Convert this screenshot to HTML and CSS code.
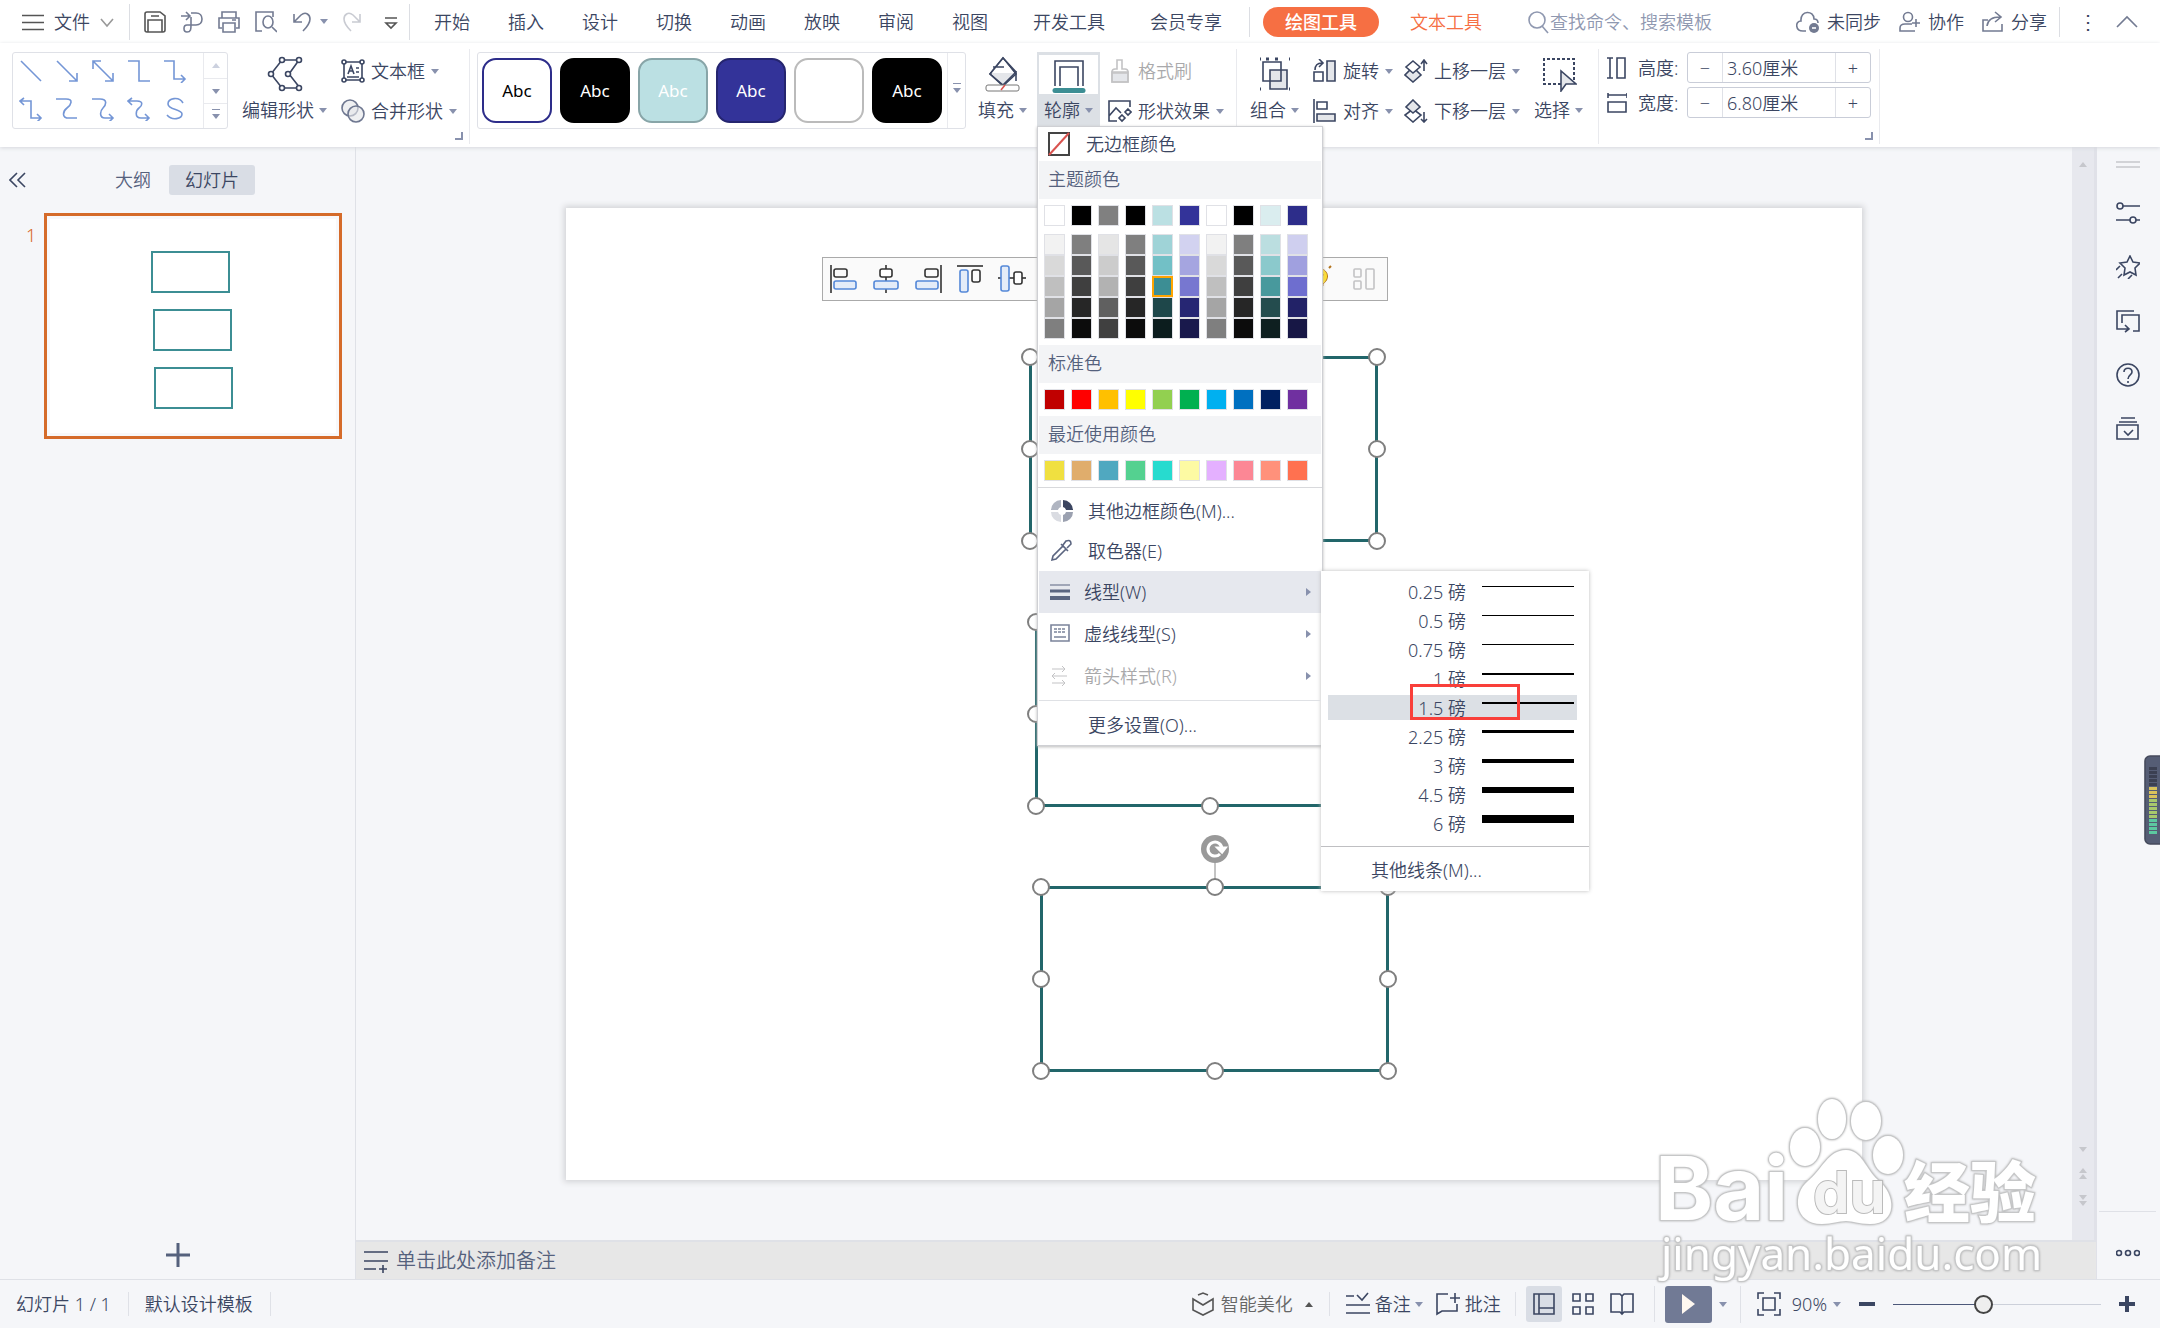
FILE: index.html
```html
<!DOCTYPE html>
<html lang="zh-CN">
<head>
<meta charset="utf-8">
<title>演示文稿</title>
<link rel="stylesheet" href="styles.css">
</head>
<body>
<header class="menubar">
  <button class="file"><svg width="22" height="22"><path d="M0 4.500h22M0 11.500h22M0 18.500h22"/></svg><span>文件</span><svg class="mute" width="14" height="22"><path d="M1 8l6 7 6-7"/></svg></button>
  <div class="quick">
    <button aria-label="保存"><svg width="22" height="22" class="dark"><path d="M1 3q0-2 2-2h13l5 4v14q0 2-2 2H3q-2 0-2-2zM4 21v-12h14v12M7 5h8"/></svg></button>
    <button aria-label="导出"><svg width="22" height="22"><path d="M0 5h8M5 1l4 4-4 4M10 2h5c8 0 8 12 0 12H6c-4 0-4 7 0 7s4-3 4-7V6"/></svg></button>
    <button aria-label="打印"><svg width="22" height="22"><path d="M4 7V1h14v6M4 17H1V7h20v10h-3M5 12h12v9H5zM14 9h4"/></svg></button>
    <button aria-label="预览"><svg width="22" height="22"><path d="M7 20H1V1h17v5M17 16l5 5"/><ellipse cx="13" cy="11" rx="5" ry="6"/></svg></button>
    <button class="undo" aria-label="撤销"><svg width="22" height="22"><path d="M2 3v8h8M2 11l7-7c5-4 9 0 9 4s-3 8-7 12"/></svg><i class="caret"></i></button>
    <button aria-label="恢复"><svg width="22" height="22" class="faint"><path d="M17 3v8H9M17 11l-7-7C5 0 1 4 1 8s3 8 7 12"/></svg></button>
    <button aria-label="更多"><svg width="22" height="22" class="dark"><path d="M5 7h12M6 12h10l-5 5z"/></svg></button>
  </div>
  <nav class="tabs">
    <a href="#">开始</a><a href="#">插入</a><a href="#">设计</a><a href="#">切换</a><a href="#">动画</a><a href="#">放映</a><a href="#">审阅</a><a href="#">视图</a><a href="#" class="wide">开发工具</a><a href="#" class="wide">会员专享</a>
  </nav>
  <a href="#" class="pill">绘图工具</a>
  <a href="#" class="texttool">文本工具</a>
  <label class="search"><svg width="22" height="24"><circle cx="9" cy="10" r="8"/><path d="M14 16l6 7"/></svg><input type="text" placeholder="查找命令、搜索模板" aria-label="搜索"></label>
  <div class="account">
    <button><svg width="24" height="22"><path d="M10 20H7c-8 0-8-10-2-10C4-1 18-1 18 8c3 0 4 2 4 4"/><circle cx="18" cy="17" r="5" class="dot"/><path class="wh" d="M16 17h4"/></svg>未同步</button>
    <button><svg width="22" height="22"><circle cx="9" cy="6" r="4.500"/><path d="M13 13H6q-5 0-5 4v3h15M17 8v8M13 12h8"/></svg>协作</button>
    <button><svg width="22" height="22"><path d="M6 9H1v11h19v-7M5 15q1-9 13-9M13 1l6 5-6 5"/></svg>分享</button>
    <button class="dots" aria-label="菜单">⋮</button>
    <button aria-label="收起"><svg width="22" height="22"><path d="M1 16L11 6l10 10"/></svg></button>
  </div>
</header>

<section class="ribbon">
  <div class="group">
    <div class="shapes">
      <div class="shapegrid">
        <svg width="24" height="24"><path d="M2 2l20 20"/></svg>
        <svg width="24" height="24"><path d="M2 2l20 20M22 14v8h-8"/></svg>
        <svg width="24" height="24"><path d="M2 2l20 20M22 14v8h-8M2 10V2h8"/></svg>
        <svg width="24" height="24"><path d="M1 2h11v20h11"/></svg>
        <svg width="24" height="24"><path d="M1 2h10v18h11M18 16l4 4-4 4"/></svg>
        <svg width="24" height="24"><path d="M5 1L1 4l4 4M1 4h11v17h10M18 17l4 4-4 4"/></svg>
        <svg width="24" height="24"><path d="M1 2h10c8 0 5 6 1 9s-6 10 2 10h8"/></svg>
        <svg width="24" height="24"><path d="M1 2h8c8 0 6 6 3 9s-4 10 2 10h8M18 17l4 4-4 4"/></svg>
        <svg width="24" height="24"><path d="M5 1L1 4l4 4M1 4h9c7 0 5 5 2 7s-5 10 2 10h8M18 17l4 4-4 4"/></svg>
        <svg width="24" height="24"><path d="M20 6C16-1 5 1 5 7s14 5 14 10-10 7-15 1"/></svg>
      </div>
      <div class="spin"><button aria-label="上"><i class="caret up pale"></i></button><button aria-label="下"><i class="caret"></i></button><button aria-label="展开"><i class="caret bar"></i></button></div>
    </div>
    <button class="big"><svg width="36" height="36"><path d="M15 4h17L22 18l11 14H15L4 18z" /><g class="fill"><circle cx="15" cy="4" r="2.500"/><circle cx="32" cy="4" r="2.500"/><circle cx="21" cy="18" r="2.500"/><circle cx="4" cy="18" r="2.500"/><circle cx="15" cy="32" r="2.500"/><circle cx="32" cy="32" r="2.500"/></g></svg><span>编辑形状<i class="caret"></i></span></button>
    <div class="stack">
      <button><svg width="24" height="24"><path d="M3 3h18v18H3zM7 15l3-8 3 8M8 12h4M15 9h3M15 13h3M6 18h12"/><g class="fill"><circle cx="3" cy="3" r="2"/><circle cx="21" cy="3" r="2"/><circle cx="3" cy="21" r="2"/><circle cx="21" cy="21" r="2"/></g></svg>文本框<i class="caret"></i></button>
      <button><svg width="24" height="24" class="soft"><circle cx="9" cy="9" r="8"/><circle cx="15" cy="15" r="8"/></svg>合并形状<i class="caret"></i></button>
    </div>
    <i class="corner"></i>
  </div>

  <div class="group styles">
    <div class="gallery">
      <button class="tile t1">Abc</button><button class="tile t2">Abc</button><button class="tile t3">Abc</button><button class="tile t4">Abc</button><button class="tile t5" aria-label="白色样式"></button><button class="tile t2">Abc</button>
      <button class="more" aria-label="更多样式"><i class="caret bar"></i></button>
    </div>
    <button class="big"><svg width="36" height="36"><path class="soft" d="M5 18L18 2l13 16-13 12z"/><path class="cover" d="M6 17L18 3l11 14z"/><path d="M5 18L18 2l13 14-13 13zM8 11h11M31 15v10"/><rect class="fill grey" x="1" y="29" width="33" height="6" rx="2"/><path class="red" d="M16 34l4-5"/></svg><span>填充<i class="caret"></i></span></button>
    <div class="outline">
      <button class="outlinebtn"><span class="iconbox"><svg width="34" height="36"><path d="M3 29V4h28v25M8 29V10h18v19"/><path class="teal" d="M3 33.500h28"/></svg></span><span class="lbl">轮廓<i class="caret"></i></span></button>
      <div class="menu">
        <button class="noborder"><svg width="22" height="24"><rect x="1" y="1" width="20" height="22" class="dark"/><path class="red" d="M1 23L21 1"/></svg>无边框颜色</button>
        <h4>主题颜色</h4>
        <div class="swatches" id="theme"></div>
        <div class="swatches tints" id="tints"></div>
        <h4>标准色</h4>
        <div class="swatches" id="standard"></div>
        <h4>最近使用颜色</h4>
        <div class="swatches" id="recent"></div>
        <ul>
          <li><button><svg width="24" height="24"><g class="pie"><path d="M13 1v7a4 4 0 0 1 3 3h7A10 10 0 0 0 13 1z" fill="#3b4560"/><path d="M11 1v7a4 4 0 0 0-3 3H1A10 10 0 0 1 11 1z" fill="#b0b5c1"/><path d="M13 23v-7a4 4 0 0 0 3-3h7A10 10 0 0 1 13 23z" fill="#9ba1b0"/><path d="M11 23v-7a4 4 0 0 1-3-3H1A10 10 0 0 0 11 23z" fill="#dadce2"/></g></svg>其他边框颜色(M)...</button></li>
          <li><button><svg width="24" height="24" class="picker"><path d="M2 21l1-4L13 7l3 3L6 20zM11 5l7 7M13 6l3-4q5-2 5 3l-4 4"/></svg>取色器(E)</button></li>
          <li class="sub on"><button><svg width="20" height="20" class="picker"><path class="w1" d="M0 3h20"/><path class="w3" d="M0 9h20"/><path class="w4" d="M0 16h20"/></svg>线型(W)<i class="arrow"></i></button>
            <div class="submenu">
              <ul id="weights"></ul>
              <button class="otherlines">其他线条(M)...</button>
              <i class="mark"></i>
            </div>
          </li>
          <li class="sub"><button><svg width="20" height="20" class="thin"><path d="M1 1h18v16H1zM4 13h12"/><path stroke-dasharray="3 1" d="M4 5h12M4 8h12"/></svg>虚线线型(S)<i class="arrow"></i></button></li>
          <li class="sub off"><button disabled><svg width="20" height="20"><path d="M2 3h13M12 0l3 3-3 3M2 10h15M5 7l-3 3 3 3M2 17h13M12 14l3 3-3 3"/></svg>箭头样式(R)<i class="arrow"></i></button></li>
          <li class="last"><button>更多设置(O)...</button></li>
        </ul>
      </div>
    </div>
    <div class="stack">
      <button disabled><svg width="24" height="24" class="faint"><path class="soft" d="M4 13h16v10H4z"/><path d="M4 13q0-3 3-3h2V1h5v9h3q3 0 3 3v10H4zM4 14h16"/></svg>格式刷</button>
      <button><svg width="24" height="24"><path d="M22 8V2H1v20h8M1 17l7-8 5 5"/><path d="M14 16l3 3-3 3-3-3zM20 10l3 3-3 3-3-3z"/></svg>形状效果<i class="caret"></i></button>
    </div>
  </div>

  <div class="group arrange">
    <button class="big"><svg width="36" height="36"><path class="soft" d="M13 14h17v19H13z"/><path d="M6 6h18v19H6z"/><path d="M3 3h1M32 3h1M3 33h1M32 33h1M9 3h3M18 3h3" class="w3"/></svg><span>组合<i class="caret"></i></span></button>
    <div class="stack">
      <button><svg width="24" height="24"><path class="soft" d="M14 2h8v20h-8z"/><path d="M10 22H1v-9h9zM2 11q0-7 7-7M6 0l4 4-4 4"/></svg>旋转<i class="caret"></i></button>
      <button><svg width="24" height="24"><path d="M1 0v24M4 3h10v7H4z"/><path class="soft" d="M4 15h18v7H4z"/></svg>对齐<i class="caret"></i></button>
    </div>
    <div class="stack">
      <button><svg width="24" height="24"><path class="soft" d="M9 8l8 8-8 7-8-7z"/><path class="cover dark2" d="M9 2l7 6-7 6-7-6z"/><path d="M20 12V2M17 5l3-4 3 4"/></svg>上移一层<i class="caret"></i></button>
      <button><svg width="24" height="24"><path class="cover dark2" d="M9 10l8 6-8 7-8-7z"/><path class="soft" d="M9 1l7 7-7 6-7-6z"/><path d="M20 13v10M17 20l3 3 3-3"/></svg>下移一层<i class="caret"></i></button>
    </div>
    <button class="big"><svg width="36" height="36"><path stroke-dasharray="3 2" class="w2" d="M20 28H3V3h30v25"/><path class="soft" d="M20 15v20l5-7 10 0z"/></svg><span>选择<i class="caret"></i></span></button>
  </div>

  <div class="group size">
    <div class="field"><svg width="20" height="24"><path d="M0 2h6M3 2v20M0 22h6M10 2h8v20h-8z"/></svg><label for="h">高度:</label><span class="stepper"><button aria-label="减小高度">−</button><input id="h" value="3.60厘米"><button aria-label="增大高度">+</button></span></div>
    <div class="field"><svg width="20" height="24"><path d="M1 2v5M1 4h19M20 2v5M1 11h18v10H1z"/></svg><label for="w">宽度:</label><span class="stepper"><button aria-label="减小宽度">−</button><input id="w" value="6.80厘米"><button aria-label="增大宽度">+</button></span></div>
    <i class="corner"></i>
  </div>
</section>

<main class="work">
  <aside class="left">
    <div class="lefttabs"><button aria-label="收起面板"><svg width="18" height="16"><path d="M8 1L1 8l7 7M16 1L9 8l7 7"/></svg></button><button class="tab">大纲</button><button class="tab on">幻灯片</button></div>
    <div class="thumbrow"><span>1</span><div class="thumb"><i class="m1"></i><i class="m2"></i><i class="m3"></i></div></div>
    <button class="add" aria-label="新建幻灯片"><svg width="26" height="26"><path d="M1 13h24M13 1v24"/></svg></button>
  </aside>
  <section class="center">
    <div class="stage">
      <div class="canvas">
        <div class="slide">
          <div class="floatbar">
            <svg width="28" height="28"><path d="M1 0v28"/><rect x="4" y="4" width="13" height="8" rx="2"/><rect class="blue" x="4" y="16" width="22" height="8" rx="2"/></svg>
            <svg width="28" height="28"><path d="M14 0v28"/><rect class="fill" x="8" y="4" width="12" height="8" rx="2"/><rect class="blue" x="2" y="16" width="24" height="8" rx="2"/></svg>
            <svg width="28" height="28"><path d="M27 0v28"/><rect x="11" y="4" width="13" height="8" rx="2"/><rect class="blue" x="2" y="16" width="22" height="8" rx="2"/></svg>
            <svg width="28" height="28"><path d="M1 1h26"/><rect class="blue" x="4" y="5" width="8" height="22" rx="2"/><rect x="16" y="5" width="8" height="12" rx="2"/></svg>
            <svg width="28" height="28"><path d="M0 13h28"/><rect class="blue" x="3" y="1" width="8" height="25" rx="2"/><rect class="fill" x="16" y="7" width="8" height="12" rx="2"/></svg>
            <svg class="bulb" width="28" height="28"><path d="M11 19C0 12 5 3 13 3s14 9 5 16v2h-7z"/><path class="base" d="M11 24h7M12 27h4M24 3l2-2M12 16l-2-5 3 2 4-2-2 5"/></svg>
            <svg class="faint" width="28" height="28"><rect x="3" y="4" width="7" height="8" rx="1"/><rect x="3" y="16" width="7" height="8" rx="1"/><rect x="15" y="4" width="8" height="20" rx="1"/></svg>
          </div>
          <div class="shape s1"><b class="h nw"></b><b class="h ne"></b><b class="h w"></b><b class="h e"></b><b class="h sw"></b><b class="h s"></b><b class="h se"></b></div>
          <div class="shape s2"><b class="h nw"></b><b class="h ne"></b><b class="h w"></b><b class="h e"></b><b class="h sw"></b><b class="h s"></b><b class="h se"></b></div>
          <div class="shape s3"><svg class="rot" width="30" height="52"><path class="stem" d="M15 28v24"/><ellipse cx="15" cy="15" rx="14" ry="14"/><path d="M20 20a7 7 0 1 1 2-5M18 14h7l-3 4z"/></svg><b class="h nw"></b><b class="h n"></b><b class="h ne"></b><b class="h w"></b><b class="h e"></b><b class="h sw"></b><b class="h s"></b><b class="h se"></b></div>
        </div>
      </div>
      <div class="scroll"><i class="caret up"></i><div class="lower"><i class="caret"></i><span><i class="caret up"></i><i class="caret up"></i></span><span><i class="caret"></i><i class="caret"></i></span></div></div>
    </div>
    <div class="notes"><svg width="24" height="24"><path d="M0 3h24M0 12h24M0 20h12M19 16v8M15 20h8"/></svg>单击此处添加备注</div>
  </section>
  <aside class="right">
    <svg class="grip" width="24" height="24"><path d="M0 9h24M0 14h24"/></svg>
    <button aria-label="属性"><svg width="24" height="24"><circle cx="4" cy="5" r="3"/><path d="M7 5h17M0 19h14M20 19h4"/><circle cx="17" cy="19" r="3"/></svg></button>
    <button aria-label="动画"><svg width="24" height="24"><path d="M14 1l3 6 7 1-5 5 1 7-6-3-6 3 1-7-5-5 7-1zM0 15l4-4M2 23l4-4M12 24l4-4"/></svg></button>
    <button aria-label="切换"><svg width="24" height="24"><path d="M18 2H1v18h12M9 16l4 4-4 3M6 14V6h17v16h-6"/></svg></button>
    <button aria-label="帮助"><svg width="24" height="24"><circle cx="12" cy="12" r="11"/><path d="M8 9c0-5 8-5 8 0 0 3-4 3-4 7M12 18v2"/></svg></button>
    <button aria-label="备份"><svg width="24" height="24"><path d="M5 1h14M3 5h18M1 8h21v14H1zM8 14l4 4 5-5"/></svg></button>
    <button class="moretools" aria-label="更多工具"><svg width="24" height="24"><circle cx="3" cy="12" r="2.500"/><circle cx="12" cy="12" r="2.500"/><circle cx="21" cy="12" r="2.500"/></svg></button>
  </aside>
</main>

<footer class="status">
  <span class="cell">幻灯片 1 / 1</span><span class="cell">默认设计模板</span>
  <div class="tools">
    <button class="beauty"><svg width="24" height="24"><path d="M2 7v11l10 5 10-5V7l-10 6zM7 3l5-2 5 2"/></svg>智能美化<i class="caret up"></i></button>
    <div class="pair"><button><svg width="26" height="24"><path d="M1 4h8M1 13h24M1 21h24M12 3l5 5 6-7"/></svg>备注<i class="caret"></i></button><button><svg width="26" height="24"><path d="M13 2H2v20l5-3h15v-7M20 1v10M15 6h10"/></svg>批注</button></div>
    <div class="views">
      <button class="on" aria-label="普通视图"><svg width="24" height="24"><path d="M2 2h20v20H2zM7 2v20M7 16h15"/></svg></button>
      <button aria-label="浏览视图"><svg width="24" height="24"><path d="M2 2h7v7H2zM15 2h7v7h-7zM2 15h7v7H2zM15 15h7v7h-7z"/></svg></button>
      <button aria-label="阅读视图"><svg width="24" height="24"><path d="M1 2h9l2 2 2-2h9v18h-9l-2 2-2-2H1zM12 4v18"/></svg></button>
    </div>
    <div class="playwrap"><button class="play" aria-label="放映"><svg width="24" height="24"><path d="M6 2l13 10L6 22z"/></svg></button><i class="caret"></i></div>
    <div class="zoom"><svg width="24" height="24"><path d="M1 7V1h6M17 1h6v6M23 17v6h-6M7 23H1v-6M6 6h12v12H6z"/></svg><button>90%<i class="caret"></i></button><button class="pm" aria-label="缩小"><svg width="16" height="24"><path d="M0 12h16"/></svg></button><input type="range" min="0" max="100" value="43" aria-label="缩放"><button class="pm" aria-label="放大"><svg width="16" height="24"><path d="M0 12h16M8 4v16"/></svg></button></div>
  </div>
</footer>

<svg class="watermark" width="400" height="200" viewBox="0 0 400 200">
  <g class="ink">
    <ellipse cx="153" cy="57" rx="15" ry="19"/><ellipse cx="180" cy="29" rx="14" ry="20"/><ellipse cx="214" cy="31" rx="15" ry="19"/><ellipse cx="236" cy="65" rx="15" ry="19"/>
    <path d="M194 60c16 0 20 20 32 30 18 14 20 44-8 44-12 0-16-3-24-3s-14 3-24 3c-28 0-30-30-14-43 14-11 20-31 38-31z"/>
    <text class="latin" x="3" y="130" font-size="88">Bai</text>
    <text class="du" x="161" y="123" font-size="58">du</text>
    <text class="cjk" x="252" y="127" font-size="66">经验</text>
    <text class="url" x="9" y="180" font-size="44">jingyan.baidu.com</text>
  </g>
</svg>
<svg class="meter" width="16" height="90"><rect x="1" y="1" width="24" height="88" rx="5"/><path class="m0" d="M9 12v20"/><path class="ma" d="M9 32v12"/><path class="mb" d="M9 44v20"/><path class="mc" d="M9 64v16"/></svg>
<script src="app.js"></script>
</body>
</html>
```
FILE: app.js
```js
const palettes = {
  theme: ['#ffffff', '#000000', '#808080', '#000000', '#bbe0e3', '#333399', '#ffffff', '#000000', '#daedef', '#2d2d8a'],
  tints: [
    '#f2f2f2', '#7f7f7f', '#e5e5e5', '#7f7f7f', '#9fd3d7', '#d2d2f0', '#f2f2f2', '#7f7f7f', '#bbdee0', '#cfcfef',
    '#d9d9d9', '#595959', '#cccccc', '#595959', '#72c0c6', '#a5a5e0', '#d9d9d9', '#595959', '#8bc9cc', '#a0a0df',
    '#bfbfbf', '#3f3f3f', '#b2b2b2', '#3f3f3f', '#3c8e94', '#7777d0', '#bfbfbf', '#3f3f3f', '#48999d', '#6e6ecf',
    '#a5a5a5', '#262626', '#606060', '#262626', '#1e474a', '#262673', '#a5a5a5', '#262626', '#244c4e', '#222267',
    '#7f7f7f', '#0c0c0c', '#404040', '#0c0c0c', '#0c1d1e', '#19194c', '#7f7f7f', '#0c0c0c', '#0e1f20', '#171745'
  ],
  standard: ['#c00000', '#ff0000', '#ffc000', '#ffff00', '#92d050', '#00b050', '#00b0f0', '#0070c0', '#002060', '#7030a0'],
  recent: ['#f0e040', '#e0ad6c', '#50a8c0', '#54d190', '#27dbcf', '#fdfaa3', '#e4b0ff', '#fc8795', '#ff917b', '#ff7150']
};
for (const [id, colors] of Object.entries(palettes)) {
  const box = document.getElementById(id);
  colors.forEach((color, i) => {
    const b = document.createElement('button');
    b.style.background = color;
    b.setAttribute('aria-label', color);
    if (id === 'tints' && i === 24) b.className = 'picked';
    box.append(b);
  });
}
const weights = [['0.25', 1], ['0.5', 1], ['0.75', 1], ['1', 2], ['1.5', 2], ['2.25', 3], ['3', 4], ['4.5', 6], ['6', 8]];
for (const [name, height] of weights) {
  const li = document.createElement('li');
  if (name === '1.5') li.className = 'picked';
  li.innerHTML = `<button><span>${name} 磅</span><i style="height:${height}px"></i></button>`;
  document.getElementById('weights').append(li);
}
```
FILE: styles.css
```css
* { box-sizing: border-box; }
body {
  margin: 0; height: 100vh; display: grid; grid-template-rows: auto auto 1fr auto; overflow: hidden;
  background: #f5f6f9; color: #3b4662;
  font: 350 18px/24px "Noto Sans", "Noto Sans CJK SC", sans-serif;
}
button, input { font: inherit; color: inherit; background: none; border: 0; padding: 0; margin: 0; }
button { display: flex; align-items: center; white-space: nowrap; }
a { color: inherit; text-decoration: none; white-space: nowrap; }
ul { list-style: none; margin: 0; padding: 0; }
svg { display: block; flex: none; fill: none; stroke: #3b4662; stroke-width: 1.6; }
svg .w1 { stroke-width: 1; } svg .w2 { stroke-width: 2; } svg .w3 { stroke-width: 3; } svg .w4 { stroke-width: 4; }
svg .fill, svg .cover { fill: #fff; }
svg .cover { stroke: none; }
svg .dark2 { stroke: #3b4662; }
svg .soft, svg.soft { fill: #e4e6ea; }
svg.soft { fill-opacity: .6; stroke: #6e7790; }
svg.faint { stroke: #c3c3c5; }
svg.picker { stroke: #5b6580; }
svg.thin { stroke: #7b849b; }
svg .red { stroke: #d9534f; }
svg .grey { stroke: #777; stroke-width: 1; }
svg .teal { stroke: #3c8e94; stroke-width: 5; stroke-linecap: round; }
.caret { flex: none; width: 0; height: 0; border: 4px solid transparent; border-top: 5px solid #8891ad; border-bottom: 0; }
.caret.up { border-top: 0; border-bottom: 5px solid #8891ad; }
.caret.pale { border-bottom-color: #ccd1df; }
.caret.bar { position: relative; }
.caret.bar::before { content: ""; position: absolute; left: -4px; top: -10px; width: 8px; height: 1px; background: #8891ad; }

.menubar { background: #fff; height: 43px; display: flex; align-items: center; padding: 0 22px; }
.menubar svg { stroke: #737b92; }
.file { gap: 10px; padding-right: 15px; }
.file svg, .menubar svg.dark { stroke: #555; }
.file svg.mute { stroke: #999; }
.menubar svg.faint { stroke: #c9cbd2; }
.quick { display: flex; align-items: center; gap: 15px; height: 36px; padding: 0 7px 0 14px; border: solid #dcdee3; border-width: 0 1px; }
.undo { gap: 6px; }
.tabs { display: flex; gap: 38px; padding: 0 27px 0 24px; }
.tabs .wide { margin-left: 7px; }
.pill { position: relative; margin-left: 14px; padding: 3px 22px; border-radius: 15px; background: #f66f43; color: #fff; font-weight: 500; }
.pill::before { content: ""; position: absolute; left: -14px; top: 0; height: 30px; width: 1px; background: #dcdee3; }
.texttool { color: #f66f43; margin: 0 46px 0 31px; }
.search { display: flex; align-items: center; color: #8f98b0; }
.search svg { stroke: #8f98b0; }
.search input { width: 180px; outline: 0; }
.search input::placeholder { color: #8f98b0; opacity: 1; }
.account { margin-left: auto; display: flex; align-items: center; gap: 18px; }
.account button { gap: 7px; }
.account svg .dot { fill: #737b92; stroke: none; }
.account svg .wh { stroke: #fff; }
.account .dots { border-left: 1px solid #dcdee3; height: 30px; padding: 0 0 0 18px; font-size: 20px; margin-left: -6px; }

.ribbon { background: #fff; height: 104px; padding-left: 12px; display: flex; align-items: stretch; box-shadow: 0 1px 4px #d5d7dc; position: relative; z-index: 2; }
.group { position: relative; display: flex; align-items: flex-start; gap: 14px; margin: 6px 0 3px; padding: 3px 12px 0 0; border-right: 1px solid #e9eaee; }
.corner { position: absolute; right: 6px; bottom: 4px; width: 8px; height: 8px; border: solid #8891ad; border-width: 0 2px 2px 0; }
.shapes { width: 216px; height: 77px; border: 1px solid #dfe1e7; border-radius: 3px; display: flex; }
.shapegrid { flex: 1; display: grid; grid-template-columns: repeat(5, 24px); gap: 12px; padding: 6px; }
.shapegrid svg { stroke: #7496d6; }
.spin { width: 24px; border-left: 1px solid #e9eaee; display: grid; grid-template-rows: repeat(3, 1fr); }
.spin button { justify-content: center; }
.spin button + button { border-top: 1px solid #e9eaee; }
.big { flex-direction: column; padding-top: 4px; gap: 6px; }
.big span, .lbl { display: flex; align-items: center; gap: 5px; }
.stack { display: flex; flex-direction: column; gap: 16px; padding-top: 7px; }
.stack button { gap: 6px; }
.stack button:disabled { color: #a9a9ab; }
.styles { padding-left: 7px; gap: 12px; }
.gallery { display: flex; align-items: center; gap: 8px; height: 77px; padding-left: 4px; border: 1px solid #dfe1e7; border-radius: 3px; }
.tile { width: 70px; height: 65px; border-radius: 14px; border: 2px solid #000; justify-content: center; font-weight: 400; font-size: 17px; }
.t1 { border-color: #2d2d8a; color: #000; }
.t2 { background: #000; color: #fff; }
.t3 { background: #bbe0e3; border-color: #88a5a8; color: #fff; }
.t4 { background: #333399; border-color: #25256f; color: #fff; }
.t5 { border-color: #bbb; }
.more { height: 75px; width: 18px; margin-left: -3px; border-left: 1px solid #e9eaee; justify-content: center; }
.outline { position: relative; margin: 0 -4px 0 -2px; }
.outlinebtn { flex-direction: column; width: 63px; height: 75px; background: #dce0e5; }
.iconbox { width: 59px; height: 39px; margin-top: 3px; background: #fff; display: grid; place-items: center; }
.lbl { margin-top: 4px; }
.arrange { padding: 3px 15px 0 13px; gap: 14px; }
.arrange .stack + .stack { margin-left: -3px; }
.size { flex-direction: column; gap: 4px; padding-left: 8px; padding-right: 8px; }
.field { display: flex; align-items: center; }
.field label { width: 60px; padding-left: 11px; }
.stepper { display: flex; height: 31px; border: 1px solid #c9cdd8; border-radius: 3px; overflow: hidden; }
.stepper button { width: 34px; justify-content: center; }
.stepper input { width: 114px; padding: 0 4px; border: solid #dfe1e7; border-width: 0 1px; outline: 0; }

.menu { position: absolute; left: 0; top: 74px; width: 286px; background: #fff; border: 1px solid #cfd0d4; box-shadow: 0 1px 3px #bbb; z-index: 5; }
.noborder { height: 34px; padding-left: 10px; gap: 16px; width: 100%; }
.noborder svg .dark, .noborder svg { stroke: #444; stroke-width: 2; }
.menu h4 { margin: 0 1px; height: 38px; padding: 6px 9px; font-weight: inherit; background: #f3f4f6; color: #55617d; }
.swatches { display: grid; grid-template-columns: repeat(10, 21px); gap: 0 6px; padding: 6px; }
.swatches button { height: 21px; border: 1px solid #e0e1e6; }
.swatches.tints { padding-top: 2px; }
.swatches .picked { border: 2px solid #ffa500; }
.menu > ul { border-top: 1px solid #d8d9dc; padding-top: 3px; }
.menu > ul > li { position: relative; margin: 0 1px; }
.menu > ul > li > button { width: 100%; height: 40px; gap: 14px; padding-left: 11px; }
.menu > ul > .sub > button { height: 42px; }
.pie { stroke: none; }
.menu .on > button { background: #e6e8ee; }
.menu .off { color: #a9a9ab; }
.menu .off svg { stroke: #c3c3c5; stroke-width: 1; }
.menu > ul > .last { border-top: 1px solid #dfe1e5; margin-top: 3px; }
.menu > ul > .last button { height: 44px; padding: 4px 0 0 49px; }
.arrow { margin-left: auto; margin-right: 10px; border: 4px solid transparent; border-left: 5px solid #8891ad; border-right: 0; }
.submenu { position: absolute; left: 282px; top: 0; width: 268px; background: #fff; box-shadow: 0 0 4px #bbb; padding-top: 6px; }
.submenu li { height: 29px; padding: 2px 12px 2px 7px; }
.submenu li button { width: 100%; height: 25px; padding-right: 2px; gap: 16px; }
.submenu li span { width: 138px; text-align: right; }
.submenu li i { width: 92px; background: #000; margin-bottom: 10px; }
.submenu .picked button { background: #dce0e5; }
.otherlines { width: 100%; height: 45px; padding: 2px 0 0 50px; border-top: 1px solid #bfbfc2; margin-top: 8px; }
.mark { position: absolute; left: 89px; top: 113px; width: 110px; height: 36px; border: 3px solid #f93f3a; }

.work { display: flex; min-height: 0; }
.left { width: 356px; display: flex; flex-direction: column; border-right: 1px solid #dfe1e7; }
.lefttabs { display: flex; align-items: center; padding: 18px 0 0 9px; height: 48px; }
.lefttabs .tab { height: 30px; padding: 0 16px; border-radius: 3px; color: #55617d; }
.lefttabs .tab:nth-child(2) { margin-left: 72px; margin-right: 2px; }
.lefttabs .tab.on { background: #d9dde5; color: #3b4662; }
.thumbrow { display: flex; padding: 18px 13px 0 26px; gap: 8px; color: #d8661f; line-height: 44px; }
.thumbrow span { width: 10px; }
.thumb { position: relative; flex: 1; aspect-ratio: 298 / 226; border: 3px solid #d56b2a; background: #fff; box-shadow: inset 0 0 0 3px #f8f8fa; }
.thumb i { position: absolute; width: 79px; height: 42px; border: 2px solid #3c8e94; }
.m1 { left: 104px; top: 35px; } .m2 { left: 106px; top: 93px; } .m3 { left: 107px; top: 151px; }
.add { margin: auto auto 11px; }
.add svg { stroke: #55617d; stroke-width: 3; }
.center { flex: 1; display: flex; flex-direction: column; min-width: 0; }
.stage { flex: 1; display: flex; min-height: 0; }
.canvas { flex: 1; display: grid; place-items: center; }
.slide { position: relative; height: calc(100% - 121px); aspect-ratio: 4 / 3; background: #fff; box-shadow: 0 0 6px 2px #d2d3d6; }
.floatbar { position: absolute; left: 256px; top: 49px; width: 566px; height: 44px; display: flex; align-items: center; gap: 14px; padding-left: 7px; background: #fafafa; border: 1px solid #aaa; }
.floatbar svg { stroke: #333; }
.floatbar .blue { stroke: #5488d8; fill: #e4ecf8; }
.floatbar .bulb { margin-left: auto; margin-right: 4px; stroke: #b3731c; fill: #ffdf2b; stroke-width: 1; }
.floatbar .base { fill: none; stroke: #b3731c; stroke-width: 2; }
.floatbar .faint { stroke: #c3c3c5; margin-right: 8px; }
.shape { position: absolute; width: 349px; height: 186px; border: 3px solid #22666a; }
.s1 { left: 463px; top: 148px; } .s2 { left: 469px; top: 413px; } .s3 { left: 474px; top: 678px; }
.h { position: absolute; width: 18px; height: 18px; border: 2px solid #7f7f7f; border-radius: 50%; background: #fff; }
.nw, .n, .ne { top: -11px; } .sw, .s, .se { bottom: -11px; } .w, .e { top: calc(50% - 9px); }
.nw, .w, .sw { left: -11px; } .ne, .e, .se { right: -11px; } .n, .s { left: calc(50% - 9px); }
.rot { position: absolute; left: calc(50% - 15px); top: -55px; stroke: #fff; stroke-width: 3; }
.rot ellipse { fill: #999; stroke: none; }
.rot .stem { stroke: #888; stroke-width: 1; }
.scroll { width: 24px; background: #e7e8ee; border-right: 2px solid #e0e1e8; display: flex; flex-direction: column; align-items: center; justify-content: space-between; padding: 15px 0 34px; }
.scroll .caret { border-top-color: #c6c7cc; }
.scroll .caret.up { border-bottom-color: #c6c7cc; }
.lower, .lower span { display: grid; gap: 16px; justify-items: center; }
.lower span { gap: 1px; }
.notes { height: 39px; display: flex; align-items: center; gap: 8px; padding-left: 8px; border-top: 2px solid #dfe1e7; background: #e7e7e7; color: #55617d; font-size: 20px; }
.right { width: 64px; display: flex; flex-direction: column; align-items: center; gap: 30px; border-left: 1px solid #e0e1e8; padding: 6px 2px 0 0; }
.right .grip { stroke: #c6c7cc; margin-bottom: -6px; }
.right .moretools { margin-top: auto; width: 57px; height: 68px; padding-top: 14px; justify-content: center; border-top: 1px solid #dfe1e7; }

.status { height: 49px; border-top: 1px solid #dfe1e7; display: flex; align-items: center; padding: 0 18px 0 0; }
.cell { padding: 0 17px 0 16px; border-right: 1px solid #dfe1e7; }
.tools { margin-left: auto; display: flex; align-items: center; }
.tools > div { display: flex; align-items: center; }
.beauty { gap: 6px; color: #666; border-right: 1px solid #dfe1e7; padding-right: 16px; }
.beauty svg { stroke: #555; }
.beauty .caret { margin-left: 6px; border-bottom-color: #555; }
.pair { gap: 12px; padding: 0 14px 0 15px; border-right: 1px solid #dfe1e7; }
.pair button { gap: 4px; }
.views { padding: 0 11px 0 10px; border-right: 1px solid #dfe1e7; }
.views button { width: 36px; height: 36px; justify-content: center; border-radius: 3px; margin-right: 3px; }
.views .on { background: #d9dde5; }
.playwrap { gap: 7px; padding: 0 13px 0 10px; border-right: 1px solid #dfe1e7; }
.play { width: 47px; height: 37px; border-radius: 3px; background: #717a95; justify-content: center; }
.play svg { fill: #fff8f0; stroke: none; }
.zoom { padding-left: 16px; gap: 11px; }
.zoom button { gap: 6px; }
.pm { margin: 0 7px; }
.pm svg { stroke-width: 4; }
.zoom input { appearance: none; width: 208px; height: 20px; background: linear-gradient(90deg, #4c587a 43%, #ccd0da 43%) center / 100% 1px no-repeat; }
.zoom input::-webkit-slider-thumb { appearance: none; width: 19px; height: 19px; border: 2px solid #444; border-radius: 50%; background: #eee; }

.watermark { position: absolute; right: 108px; bottom: 38px; z-index: 8; pointer-events: none; filter: drop-shadow(0 0 1px #aaa); }
.ink { fill: #fff; stroke: #c6c7c8; stroke-width: 2; paint-order: stroke; }
.latin, .du { font-family: Inter, sans-serif; font-weight: 700; }
.du { fill: #f4f4f4; stroke: #bbb; }
.cjk { font-family: "Noto Sans CJK SC", sans-serif; font-weight: 900; }
.url { font-family: "Noto Sans", sans-serif; font-weight: 400; }
.meter { position: absolute; right: 0; top: 755px; z-index: 8; }
.meter rect { fill: #555d75; stroke: #454a5c; }
.meter path { stroke-width: 8; stroke-dasharray: 3 1; }
.meter .m0 { stroke: #3b4052; } .meter .ma { stroke: #d8c35c; } .meter .mb { stroke: #a8c86c; } .meter .mc { stroke: #5cc8a0; }
```
